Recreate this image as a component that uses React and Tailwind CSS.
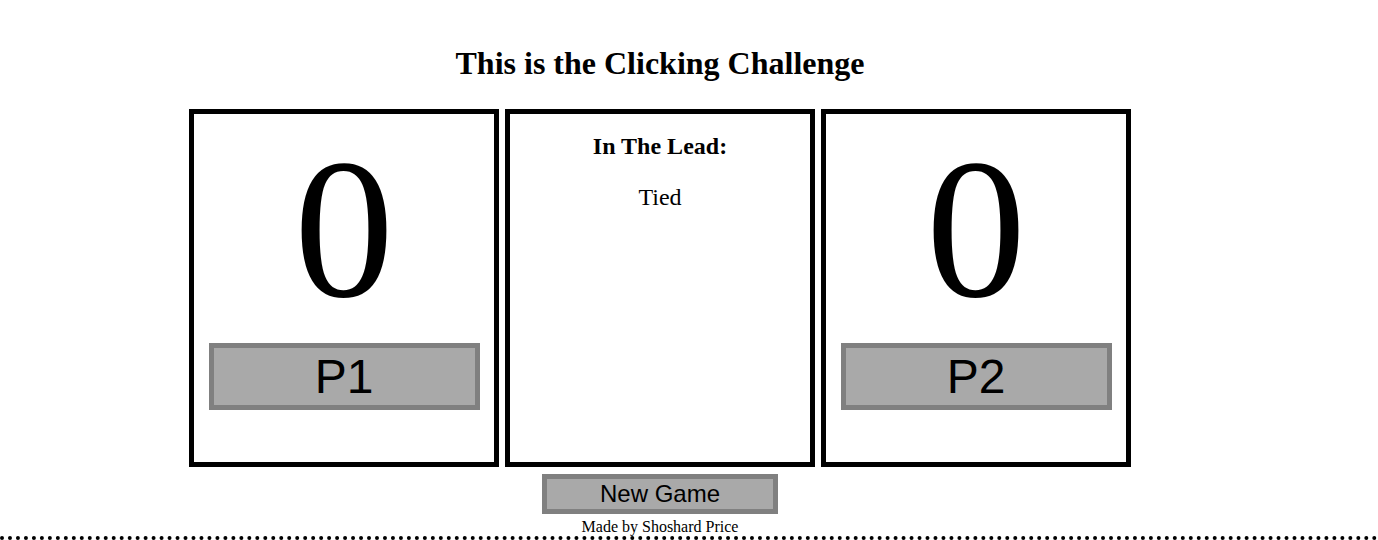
const serif = "font-['Liberation_Serif','Times_New_Roman',serif]"
const sans = "font-['Liberation_Sans',Arial,sans-serif]"

function PlayerPanel({ score, label }) {
  return (
    <div className="flex h-[358px] w-[310px] flex-col border-[5px] border-black">
      <div className={`${serif} text-center text-[200px] leading-[230px] text-black`}>{score}</div>
      <button
        type="button"
        className={`${sans} mx-auto -mt-px h-[67px] w-[271px] border-[5px] border-[#808080] bg-[#a9a9a9] text-[48px] leading-[55px] text-black`}
      >
        {label}
      </button>
    </div>
  )
}

function LeadPanel({ leader }) {
  return (
    <div className={`${serif} flex h-[358px] w-[310px] flex-col items-center border-[5px] border-black text-black`}>
      <h2 className="mt-[18px] text-[24px] font-bold leading-[28px]">In The Lead:</h2>
      <p className="mt-[23px] text-[24px] leading-[28px]">{leader}</p>
    </div>
  )
}

export default function App() {
  const p1 = 0
  const p2 = 0
  const leader = p1 === p2 ? 'Tied' : p1 > p2 ? 'P1' : 'P2'

  return (
    <div className="flex h-[540px] w-full flex-col overflow-hidden bg-white">
      <div className="flex w-[1320px] flex-col items-center pt-[45px]">
        <h1 className={`${serif} text-[32px] font-bold leading-[37px] text-black`}>
          This is the Clicking Challenge
        </h1>

        <div className="mt-[27px] flex gap-[6px]">
          <PlayerPanel score={p1} label="P1" />
          <LeadPanel leader={leader} />
          <PlayerPanel score={p2} label="P2" />
        </div>

        <button
          type="button"
          className={`${sans} mt-[7px] h-[40px] w-[236px] border-[5px] border-[#808080] bg-[#a9a9a9] text-[24px] leading-[28px] text-black`}
        >
          New Game
        </button>

        <p className={`${serif} mt-[4px] text-[16px] leading-[18px] text-black`}>Made by Shoshard Price</p>
      </div>

      <div className="h-10 w-full shrink-0 border-t-4 border-dotted border-black" />
    </div>
  )
}
